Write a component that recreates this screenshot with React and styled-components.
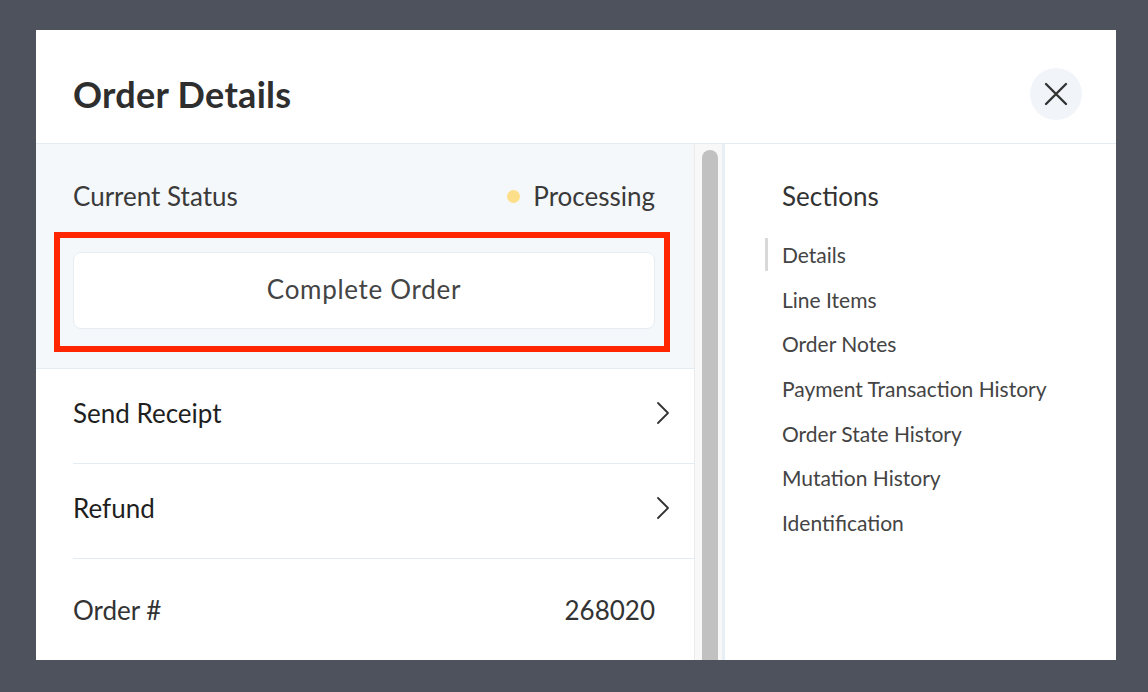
import styled, { createGlobalStyle } from "styled-components"

const GlobalStyle = createGlobalStyle`
  html, body {
    margin: 0;
    background: #4e525d;
    font-family: "Lato", "Noto Sans", sans-serif;
  }
  * { box-sizing: border-box; }
`

const sections = [
  "Details",
  "Line Items",
  "Order Notes",
  "Payment Transaction History",
  "Order State History",
  "Mutation History",
  "Identification",
]

export default function App() {
  return (
    <>
      <GlobalStyle />
      <Page>
        <Modal>
          <Header>
            <Title>Order Details</Title>
            <CloseButton aria-label="Close">
              <svg width="24" height="24" viewBox="0 0 24 24" fill="none" stroke="#333" strokeWidth="2.4" strokeLinecap="round">
                <path d="M2 2 22 22M22 2 2 22" />
              </svg>
            </CloseButton>
          </Header>

          <Body>
            <LeftColumn>
              <StatusSection>
                <StatusRow>
                  <span>Current Status</span>
                  <Status>
                    <Dot />
                    Processing
                  </Status>
                </StatusRow>
                <Highlighted>
                  <CompleteButton>Complete Order</CompleteButton>
                </Highlighted>
              </StatusSection>

              <ActionRow>
                <span>Send Receipt</span>
                <Chevron />
              </ActionRow>
              <ActionRow>
                <span>Refund</span>
                <Chevron />
              </ActionRow>
              <InfoRow>
                <span>Order #</span>
                <span>268020</span>
              </InfoRow>
            </LeftColumn>

            <ScrollTrack>
              <Thumb />
            </ScrollTrack>

            <Nav>
              <NavTitle>Sections</NavTitle>
              <NavList>
                {sections.map((s, i) => (
                  <NavItem key={s} active={i === 0}>{s}</NavItem>
                ))}
              </NavList>
            </Nav>
          </Body>
        </Modal>
      </Page>
    </>
  )
}

function Chevron() {
  return (
    <ChevronIcon width="14" height="24" viewBox="0 0 14 24" fill="none" stroke="#333" strokeWidth="1.8" strokeLinecap="round" strokeLinejoin="round">
      <path d="M2 2 12 12 2 22" />
    </ChevronIcon>
  )
}

const Page = styled.div`
  height: 692px;
  padding: 30px 32px 0 36px;
  overflow: hidden;
`
const Modal = styled.div`
  width: 1080px;
  height: 630px;
  background: #fff;
  display: flex;
  flex-direction: column;
  overflow: hidden;
`
const Header = styled.header`
  flex: 0 0 114px;
  display: flex;
  align-items: center;
  justify-content: space-between;
  padding: 14px 34px 0 37px;
  border-bottom: 1px solid #e3ecf3;
`
const Title = styled.h1`
  margin: 0;
  font-size: 36px;
  font-weight: 700;
  letter-spacing: 0.3px;
  color: #2e2e2e;
`
const CloseButton = styled.button`
  width: 52px;
  height: 52px;
  border: none;
  border-radius: 50%;
  background: #f1f5f9;
  display: flex;
  align-items: center;
  justify-content: center;
  padding: 0;
`
const Body = styled.div`
  flex: 1;
  display: flex;
  min-height: 0;
`
const LeftColumn = styled.div`
  flex: 0 0 658px;
  display: flex;
  flex-direction: column;
  font-size: 26px;
`
const StatusSection = styled.section`
  background: #f5f8fa;
  padding: 35px 39px 39px 37px;
  border-bottom: 1px solid #e3ecf3;
`
const StatusRow = styled.div`
  height: 34px;
  display: flex;
  align-items: center;
  justify-content: space-between;
  color: #3a3a3a;
  margin-bottom: 39px;
`
const Status = styled.span`
  display: flex;
  align-items: center;
  gap: 13px;
`
const Dot = styled.span`
  width: 13px;
  height: 13px;
  border-radius: 50%;
  background: #fcdf88;
`
const Highlighted = styled.div`
  position: relative;

  &::after {
    content: "";
    position: absolute;
    top: -20px;
    left: -19px;
    right: -15px;
    bottom: -23px;
    border: 6px solid #ff2600;
    pointer-events: none;
  }
`
const CompleteButton = styled.button`
  width: 100%;
  height: 77px;
  padding: 0 0 4px;
  background: #fff;
  border: 1px solid #e6eef4;
  border-radius: 8px;
  font-family: inherit;
  font-size: 26px;
  color: #444;
  letter-spacing: 0.7px;
`
const ActionRow = styled.div`
  flex: 0 0 95px;
  margin-left: 37px;
  padding: 0 24px 6px 0;
  display: flex;
  align-items: center;
  justify-content: space-between;
  border-bottom: 1px solid #e3ecf3;
  color: #1f1f1f;
`
const ChevronIcon = styled.svg`
  display: block;
`
const InfoRow = styled.div`
  flex: 0 0 106px;
  padding: 0 39px 4px 37px;
  display: flex;
  align-items: center;
  justify-content: space-between;
  color: #333;
`
const ScrollTrack = styled.div`
  flex: 0 0 31px;
  background: #f8f8f8;
  border-left: 1px solid #ebebeb;
  border-right: 3px solid #e8f0f6;
  padding: 6px 0 0 7px;
`
const Thumb = styled.div`
  width: 16px;
  height: 100%;
  border-radius: 8px 8px 0 0;
  background: #c1c1c1;
`
const Nav = styled.nav`
  flex: 1;
  padding: 35px 0 0 40px;
`
const NavTitle = styled.h2`
  margin: 0 0 0 17px;
  height: 34px;
  line-height: 34px;
  font-size: 26px;
  font-weight: 400;
  color: #333;
`
const NavList = styled.ul`
  list-style: none;
  margin: 19px 0 0;
  padding: 0;
`
const NavItem = styled.li`
  height: 44.7px;
  display: flex;
  align-items: center;
  padding-left: 14px;
  font-size: 21px;
  color: #444;
  border-left: 3px solid transparent;
  border-image: ${(p) => (p.active ? "linear-gradient(to bottom, transparent 7px, #d9d9d9 7px, #d9d9d9 38px, transparent 38px) 1" : "none")};
`
